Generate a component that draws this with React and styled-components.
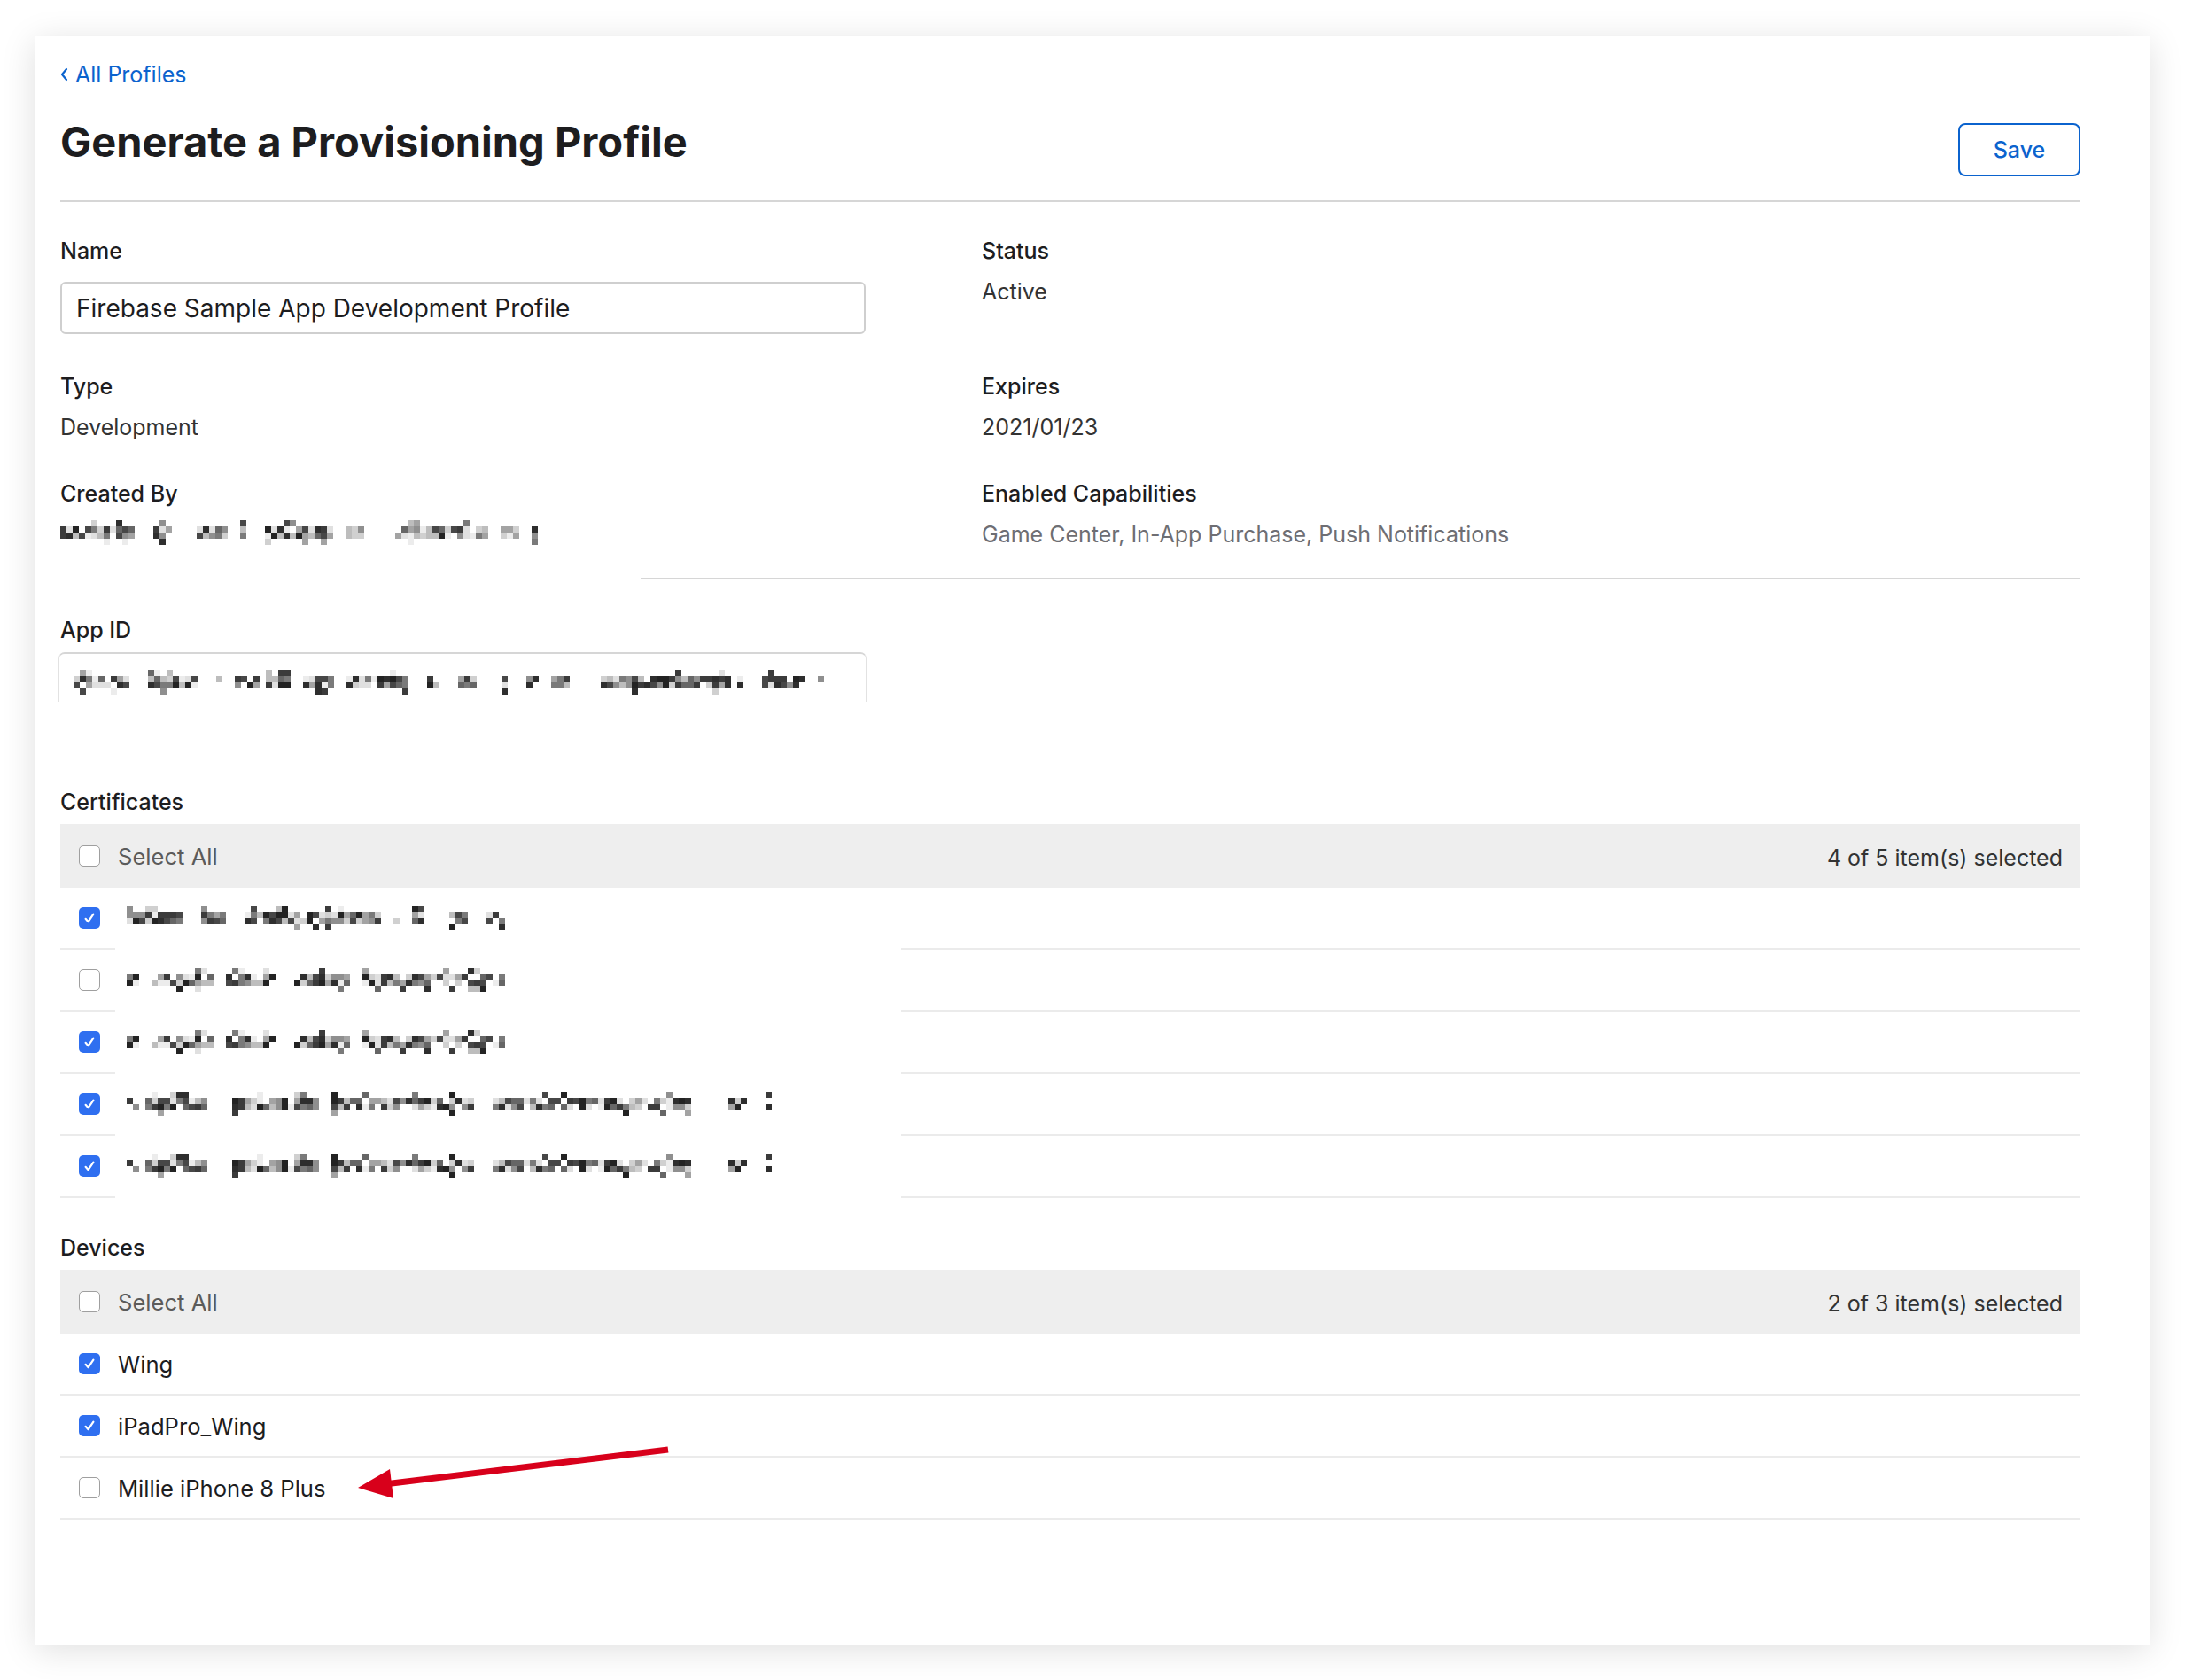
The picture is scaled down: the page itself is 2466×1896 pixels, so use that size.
import React from "react";
import styled, { createGlobalStyle } from "styled-components";

const GlobalStyle = createGlobalStyle`
  html, body { margin: 0; padding: 0; background: #ffffff; }
  body { font-family: Inter, "Noto Sans", sans-serif; color: #1d1d1f; -webkit-font-smoothing: antialiased; }
  * { box-sizing: border-box; }
`;

const Page = styled.div`
  padding: 41px 40px 40px 39px;
`;

const Card = styled.main`
  position: relative;
  height: 1815px;
  background: #ffffff;
  box-shadow: 0 6px 36px rgba(0, 0, 0, 0.13);
  padding: 26px 78px 0 29px;
`;

const BackLink = styled.a`
  display: inline-flex;
  align-items: center;
  gap: 8px;
  font-size: 25px;
  line-height: 34px;
  color: #0b63ce;
  text-decoration: none;
`;

const HeaderRow = styled.div`
  display: flex;
  justify-content: space-between;
  align-items: flex-start;
  margin-top: 31px;
`;

const Title = styled.h1`
  margin: 0;
  font-size: 47px;
  line-height: 56px;
  font-weight: 700;
  color: #1d1d1f;
`;

const SaveButton = styled.button`
  margin-top: 7px;
  width: 138px;
  height: 60px;
  border: 2px solid #0b63ce;
  border-radius: 8px;
  background: #ffffff;
  color: #0b63ce;
  font-family: inherit;
  font-size: 25px;
  font-weight: 500;
`;

const Divider = styled.hr`
  margin: ${(p) => p.$top}px 0 0 ${(p) => p.$inset || 0}px;
  border: 0;
  height: 2px;
  background: #d6d6d6;
`;

const InfoGrid = styled.div`
  display: grid;
  grid-template-columns: 1040px 1fr;
  row-gap: 43px;
  padding-top: 39px;
`;

const Field = styled.div`
  display: flex;
  flex-direction: column;
  align-items: flex-start;
  gap: ${(p) => p.$gap ?? 14}px;
`;

const Label = styled.div`
  font-size: 25px;
  line-height: 32px;
  font-weight: 500;
  color: #1d1d1f;
`;

const Value = styled.div`
  font-size: 25px;
  line-height: 32px;
  color: ${(p) => (p.$muted ? "#6e6e73" : "#333333")};
`;

const TextInput = styled.div`
  width: 909px;
  height: 59px;
  border: 2px solid #cfcfcf;
  border-radius: 6px;
  padding: 0 16px;
  display: flex;
  align-items: center;
  font-size: 28px;
  color: #1d1d1f;
`;

const AppIdBox = styled.div`
  width: 912px;
  height: 56px;
  margin-left: -2px;
  border: 1px solid #e2e2e2;
  border-top: 2px solid #d6d6d6;
  border-bottom: 0;
  border-radius: 7px 7px 0 0;
  padding: 18px 0 0 16px;
`;

const AppIdSection = styled.section`
  margin-top: 41px;
`;

const ListSection = styled.section`
  margin-top: ${(p) => p.$top}px;
`;

const SectionTitle = styled.div`
  font-size: 25px;
  line-height: 32px;
  font-weight: 500;
  color: #1d1d1f;
  margin-bottom: 9px;
`;

const ListHeader = styled.div`
  display: flex;
  align-items: center;
  justify-content: space-between;
  height: 72px;
  background: #eeeeee;
  padding: 0 20px 0 21px;
`;

const CheckLabel = styled.div`
  display: flex;
  align-items: center;
  gap: 20px;
  font-size: 25.6px;
  color: ${(p) => (p.$muted ? "#5b5b5b" : "#1d1d1f")};
`;

const Count = styled.div`
  font-size: 25px;
  color: #333333;
  padding-top: 4px;
`;

const ListRow = styled.div`
  position: relative;
  display: flex;
  align-items: center;
  height: 70px;
  padding-left: 21px;
  border-bottom: 2px solid #ebebeb;
`;

const RedactCell = styled.div`
  align-self: stretch;
  width: 887px;
  margin-left: 17px;
  background: #ffffff;
  box-shadow: 0 2px 0 #ffffff;
  display: flex;
  align-items: center;
  padding-left: 13px;
`;

const Box = styled.span`
  flex: none;
  width: 24px;
  height: 24px;
  border-radius: 5px;
  display: inline-flex;
  align-items: center;
  justify-content: center;
  background: ${(p) => (p.$checked ? "#2f6ff0" : "#ffffff")};
  border: ${(p) => (p.$checked ? "none" : "1.5px solid #9f9f9f")};
`;

const ArrowLayer = styled.svg`
  position: absolute;
  left: 330px;
  top: -20px;
  overflow: visible;
  pointer-events: none;
`;

function Checkbox({ checked }) {
  return (
    <Box $checked={checked}>
      {checked && (
        <svg width="16" height="16" viewBox="0 0 16 16">
          <path d="M3.6 8.8 L6.6 12.2 L12.4 3.6" fill="none" stroke="#fff" strokeWidth="2.2" strokeLinecap="round" strokeLinejoin="round" />
        </svg>
      )}
    </Box>
  );
}

function rng(seed) {
  let a = seed >>> 0;
  return () => {
    a |= 0;
    a = (a + 0x6d2b79f5) | 0;
    let t = Math.imul(a ^ (a >>> 15), 1 | a);
    t = (t + Math.imul(t ^ (t >>> 7), 61 | t)) ^ t;
    return ((t ^ (t >>> 14)) >>> 0) / 4294967296;
  };
}

const DARK = ["#232323", "#2e2e2e", "#3b3b3b", "#474747"];
const MID = ["#666666", "#7a7a7a", "#8f8f8f", "#a3a3a3"];
const LIGHT = ["#bdbdbd", "#d0d0d0", "#e0e0e0", "#ececec"];

function Mosaic({ seed, width, cell = 7, light = false }) {
  const r = rng(seed);
  const cols = Math.floor(width / cell);
  const rects = [];
  let gap = 0;
  const pick = () => {
    const v = r();
    const dk = light ? 0.3 : 0.45;
    const md = light ? 0.62 : 0.72;
    const set = v < dk ? DARK : v < md ? MID : LIGHT;
    return set[Math.floor(r() * 4)];
  };
  for (let c = 0; c < cols; c++) {
    if (gap > 0) { gap--; continue; }
    if (c > 0 && r() < 0.1) { gap = 1 + Math.floor(r() * 2); continue; }
    const h1 = r() < 0.9;
    const h2 = r() < 0.85;
    if (h1) rects.push(<rect key={`${c}-1`} x={c * cell} y={cell} width={cell} height={cell} fill={pick()} />);
    if (h2) rects.push(<rect key={`${c}-2`} x={c * cell} y={2 * cell} width={cell} height={cell} fill={pick()} />);
    if (r() < 0.16) rects.push(<rect key={`${c}-0`} x={c * cell} y={0} width={cell} height={cell} fill={pick()} />);
    if (r() < 0.12) rects.push(<rect key={`${c}-3`} x={c * cell} y={3 * cell} width={cell} height={cell} fill={pick()} />);
  }
  return (
    <svg width={cols * cell} height={cell * 4} viewBox={`0 0 ${cols * cell} ${cell * 4}`} shapeRendering="crispEdges">
      {rects}
    </svg>
  );
}

function Arrow() {
  return (
    <ArrowLayer width="370" height="70" viewBox="0 0 370 70">
      <line x1="40" y1="49.5" x2="356" y2="11" stroke="#d8001b" strokeWidth="7" />
      <polygon points="6,54 42,33 46,66" fill="#d8001b" />
    </ArrowLayer>
  );
}

const certs = [
  { checked: true, seed: 11, width: 432 },
  { checked: false, seed: 23, width: 432 },
  { checked: true, seed: 23, width: 432 },
  { checked: true, seed: 37, width: 728 },
  { checked: true, seed: 37, width: 728 },
];

const devices = [
  { checked: true, name: "Wing" },
  { checked: true, name: "iPadPro_Wing" },
  { checked: false, name: "Millie iPhone 8 Plus", arrow: true },
];

export default function App() {
  return (
    <>
      <GlobalStyle />
      <Page>
        <Card>
          <BackLink href="#">
            <svg width="9" height="16" viewBox="0 0 9 16">
              <path d="M7 2 L2 8 L7 14" fill="none" stroke="#0b63ce" strokeWidth="2.2" strokeLinecap="round" strokeLinejoin="round" />
            </svg>
            All Profiles
          </BackLink>
          <HeaderRow>
            <Title>Generate a Provisioning Profile</Title>
            <SaveButton>Save</SaveButton>
          </HeaderRow>
          <Divider $top={27} />

          <InfoGrid>
            <Field $gap={19}>
              <Label>Name</Label>
              <TextInput>Firebase Sample App Development Profile</TextInput>
            </Field>
            <Field>
              <Label>Status</Label>
              <Value>Active</Value>
            </Field>
            <Field>
              <Label>Type</Label>
              <Value>Development</Value>
            </Field>
            <Field>
              <Label>Expires</Label>
              <Value>2021/01/23</Value>
            </Field>
            <Field>
              <Label>Created By</Label>
              <Mosaic seed={5} width={540} light />
            </Field>
            <Field>
              <Label>Enabled Capabilities</Label>
              <Value $muted>Game Center, In-App Purchase, Push Notifications</Value>
            </Field>
          </InfoGrid>
          <Divider $top={33} $inset={655} />

          <AppIdSection>
            <Field $gap={9}>
              <Label>App ID</Label>
              <AppIdBox>
                <Mosaic seed={91} width={850} />
              </AppIdBox>
            </Field>
          </AppIdSection>

          <ListSection $top={97}>
            <SectionTitle>Certificates</SectionTitle>
            <ListHeader>
              <CheckLabel $muted>
                <Checkbox checked={false} />
                Select All
              </CheckLabel>
              <Count>4 of 5 item(s) selected</Count>
            </ListHeader>
            {certs.map((c, i) => (
              <ListRow key={i}>
                <Checkbox checked={c.checked} />
                <RedactCell>
                  <Mosaic seed={c.seed} width={c.width} />
                </RedactCell>
              </ListRow>
            ))}
          </ListSection>

          <ListSection $top={40}>
            <SectionTitle>Devices</SectionTitle>
            <ListHeader>
              <CheckLabel $muted>
                <Checkbox checked={false} />
                Select All
              </CheckLabel>
              <Count>2 of 3 item(s) selected</Count>
            </ListHeader>
            {devices.map((d) => (
              <ListRow key={d.name}>
                <CheckLabel>
                  <Checkbox checked={d.checked} />
                  {d.name}
                </CheckLabel>
                {d.arrow && <Arrow />}
              </ListRow>
            ))}
          </ListSection>
        </Card>
      </Page>
    </>
  );
}
